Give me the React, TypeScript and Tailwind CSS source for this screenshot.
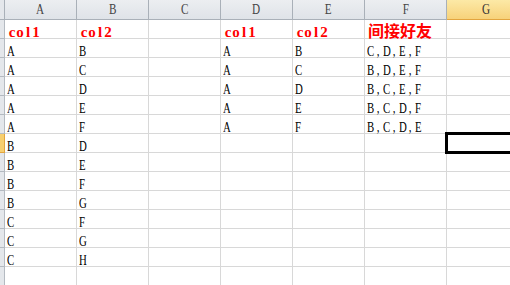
const cols = [
  { label: "A", w: "w-[72px]" },
  { label: "B", w: "w-[72px]" },
  { label: "C", w: "w-[72px]" },
  { label: "D", w: "w-[72px]" },
  { label: "E", w: "w-[72px]" },
  { label: "F", w: "w-[82px]" },
  { label: "G", w: "w-[80px]" },
];

const rows: string[][] = [
  ["col1", "col2", "", "col1", "col2", "间接好友"],
  ["A", "B", "", "A", "B", "C,D,E,F"],
  ["A", "C", "", "A", "C", "B,D,E,F"],
  ["A", "D", "", "A", "D", "B,C,E,F"],
  ["A", "E", "", "A", "E", "B,C,D,F"],
  ["A", "F", "", "A", "F", "B,C,D,E"],
  ["B", "D"],
  ["B", "E"],
  ["B", "F"],
  ["B", "G"],
  ["C", "F"],
  ["C", "G"],
  ["C", "H"],
  [],
];

// SimSun-like look: narrow serif glyphs on a fixed 8px half-width grid
function HalfWidth({ text, narrow }: { text: string; narrow: boolean }) {
  return (
    <>
      {text.split("").map((ch, k) => (
        <span key={k} className={`inline-block w-[8px] text-center ${narrow ? "scale-x-[0.72]" : ""}`}>
          {ch}
        </span>
      ))}
    </>
  );
}

export default function App() {
  return (
    <div className="relative w-[510px] h-[285px] overflow-hidden bg-white font-[family-name:Liberation_Serif,Noto_Sans_CJK_SC,serif]">
      {/* column headers */}
      <div className="flex h-[20px]">
        <div className="w-[5px] shrink-0 bg-[#e4e7eb] border-r border-b border-[#a9b0b8]" />
        {cols.map((c) => {
          const active = c.label === "G";
          return (
            <div
              key={c.label}
              className={`${c.w} shrink-0 flex items-center justify-center border-r border-b text-[14px] leading-none pt-[1px] ${
                active
                  ? "bg-gradient-to-b from-[#fce9a6] to-[#f7d27a] border-[#e2a53f] text-[#333]"
                  : "bg-gradient-to-b from-[#eceef1] to-[#dfe3e8] border-[#a9b0b8] text-[#444]"
              }`}
            >
              <span className="inline-block scale-x-[0.8]">{c.label}</span>
            </div>
          );
        })}
      </div>

      {rows.map((r, i) => {
        const activeRow = i === 6;
        const head = i === 0;
        return (
          <div key={i} className="flex h-[19px]">
            <div
              className={`w-[5px] shrink-0 border-r border-b ${
                activeRow ? "bg-[#f7cf70] border-[#e2a53f]" : "bg-[#e4e7eb] border-[#b4bac1]"
              }`}
            />
            {cols.map((c, j) => {
              const v = r[j] ?? "";
              const cjk = /[\u4e00-\u9fff]/.test(v);
              return (
                <div
                  key={c.label}
                  className={`${c.w} shrink-0 flex items-end border-r border-b border-[#d8d8d8] whitespace-nowrap ${
                    head ? "text-[#ff0000] font-bold pl-[3px]" : "text-black pl-[1px]"
                  } ${
                    cjk
                      ? "text-[16px] leading-[16px] font-[family-name:Noto_Sans_CJK_SC,sans-serif]"
                      : "text-[15px] leading-[12px]"
                  }`}
                >
                  {cjk ? v : <HalfWidth text={v} narrow={!head} />}
                </div>
              );
            })}
          </div>
        );
      })}

      {/* selected cell G7 */}
      <div className="absolute left-[445px] top-[132px] w-[80px] h-[22px] border-[3px] border-black" />
    </div>
  );
}
